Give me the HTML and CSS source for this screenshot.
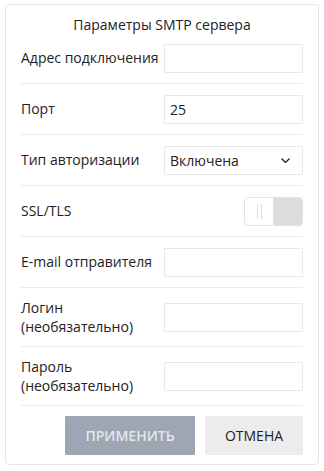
FILE: index.html
```html
<!DOCTYPE html>
<html lang="ru">

<head>
  <meta charset="UTF-8">
  <title>Параметры SMTP сервера</title>
  <link rel="stylesheet" href="styles.css">
</head>

<body>
  <form class="card" id="smtpForm">
    <h1 class="card-title">Параметры SMTP сервера</h1>

    <div class="row">
      <label for="host">Адрес подключения</label>
      <input type="text" id="host">
    </div>

    <div class="row">
      <label for="port">Порт</label>
      <input type="text" id="port" value="25">
    </div>

    <div class="row">
      <label for="auth">Тип авторизации</label>
      <div class="select">
        <span>Включена</span>
        <svg width="9" height="5" viewBox="0 0 9 5"><path d="M0.5 0.5l4 4 4-4" fill="none" stroke="#222" stroke-width="1.3"/></svg>
      </div>
    </div>

    <div class="row">
      <label>SSL/TLS</label>
      <div class="toggle">
        <div class="knob"><i></i><i></i></div>
      </div>
    </div>

    <div class="row">
      <label for="sender">E-mail отправителя</label>
      <input type="text" id="sender">
    </div>

    <div class="row">
      <label for="login">Логин<br>(необязательно)</label>
      <input type="text" id="login">
    </div>

    <div class="row">
      <label for="pass">Пароль<br>(необязательно)</label>
      <input type="password" id="pass">
    </div>

    <div class="btn-group">
      <button type="submit" class="btn-apply">Применить</button>
      <button type="button" class="btn-cancel">Отмена</button>
    </div>
  </form>
</body>

</html>
```

FILE: styles.css
```css
body {
  margin: 0;
  padding: 4px 5px 5px;
  font-family: "Open Sans", sans-serif;
  font-size: 14px;
  color: #222;
  background: #fff;
}

.card {
  border: 1px solid #e6e6e6;
  border-radius: 4px;
  padding: 12px 15px 9px;
}

.card-title {
  margin: 0;
  font-size: 14px;
  font-weight: normal;
  line-height: 16px;
  text-align: center;
}

.row {
  display: grid;
  grid-template-columns: 143px 1fr;
  align-items: center;
  padding: 11px 0 10px;
  border-bottom: 1px solid #ebebeb;
}

.row label {
  line-height: 18.5px;
}

.row input,
.select {
  box-sizing: border-box;
  width: 100%;
  height: 29px;
  margin: 0;
  padding: 0 5px;
  border: 1px solid #e8e8e8;
  border-radius: 1px;
  font: inherit;
  color: #222;
  outline: none;
}

.select {
  display: flex;
  align-items: center;
  justify-content: space-between;
  padding-right: 12px;
}

.toggle {
  justify-self: end;
  box-sizing: border-box;
  display: flex;
  width: 59px;
  height: 29px;
  border: 1px solid #e3e3e3;
  border-radius: 4px;
  background: #dcdcdc;
  overflow: hidden;
}

.knob {
  display: flex;
  gap: 3px;
  justify-content: center;
  align-items: center;
  width: 28px;
  background: #fff;
  border-right: 1px solid #e3e3e3;
}

.knob i {
  width: 1px;
  height: 15px;
  background: #e0e0e0;
}

.btn-group {
  display: flex;
  gap: 10px;
  justify-content: flex-end;
  margin-top: 10px;
}

button {
  height: 39px;
  border: none;
  border-radius: 1px;
  font-family: "Open Sans", sans-serif;
  font-size: 14px;
  text-transform: uppercase;
  cursor: pointer;
}

.btn-apply {
  width: 130px;
  background: #9ea6b3;
  color: #e4e7ec;
  font-weight: 600;
}

.btn-cancel {
  width: 98px;
  background: #ececec;
  color: #222;
}
```
